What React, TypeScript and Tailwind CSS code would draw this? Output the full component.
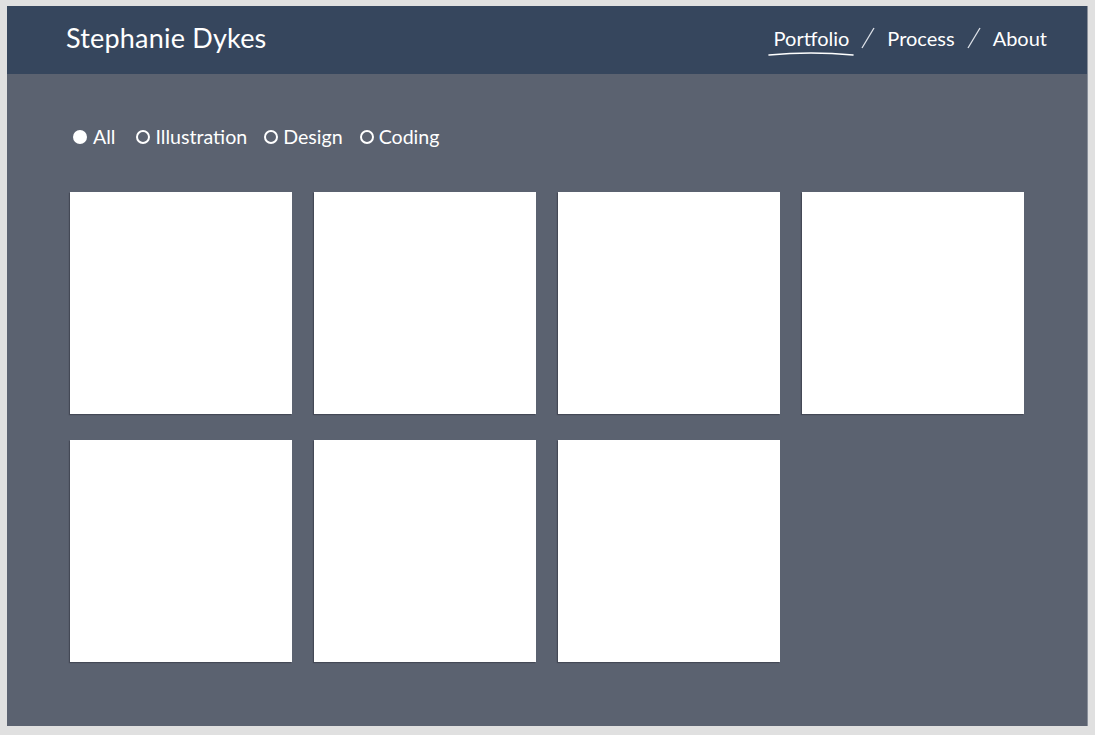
const filters = [
  { label: 'All', active: true },
  { label: 'Illustration', active: false },
  { label: 'Design', active: false },
  { label: 'Coding', active: false },
];

const navLinks = ['Portfolio', 'Process', 'About'];

export default function App() {
  const tiles = [1, 2, 3, 4, 5, 6, 7];

  return (
    <div className="w-[1095px] h-[735px] bg-[#e0e0e0] pt-[6px] pl-[7px] font-['Lato',sans-serif]">
      <div className="w-[1081px] h-[720px] bg-[#5b6270] border-r border-[#8a909b] flex flex-col">
        <header className="h-[68px] bg-[#36465d] flex items-center justify-between pl-[59px] pr-[40px] shrink-0">
          <h1 className="text-white text-[27px] tracking-[0.2px] leading-none pb-[6px]">Stephanie Dykes</h1>
          <nav className="flex items-center text-white text-[20px] leading-none pb-[4px]">
            {navLinks.map((link, i) => (
              <div key={link} className="flex items-center">
                {i > 0 && (
                  <svg width="36" height="24" viewBox="0 0 36 24" className="mx-[1px]">
                    <line x1="12" y1="22" x2="24" y2="2" stroke="#dfe3ea" strokeWidth="1.3" />
                  </svg>
                )}
                <span className="relative">
                  {link}
                  {i === 0 && (
                    <svg width="86" height="6" viewBox="0 0 86 6" className="absolute left-[-6px] top-[23px]">
                      <path d="M1 4 Q 43 0 85 4" stroke="#ffffff" strokeWidth="1.6" fill="none" strokeLinecap="round" />
                    </svg>
                  )}
                </span>
              </div>
            ))}
          </nav>
        </header>

        <main className="pl-[63px] pt-[51px]">
          {/* Filtros */}
          <div className="flex items-center h-[24px] pl-[3px] text-white text-[19.6px] leading-none">
            {filters.map((f, i) => (
              <label key={f.label} className={i === 0 ? 'flex items-center mr-[21px]' : 'flex items-center mr-[17px]'}>
                <span
                  className={
                    f.active
                      ? 'w-[14px] h-[14px] rounded-full bg-white mr-[6px]'
                      : 'w-[14px] h-[14px] rounded-full border-[2px] border-white mr-[5px]'
                  }
                />
                {f.label}
              </label>
            ))}
          </div>

          {/* Grade de trabalhos */}
          <div className="grid grid-cols-[repeat(4,222px)] gap-x-[22px] gap-y-[26px] mt-[43px]">
            {tiles.map((t) => (
              <div key={t} className="w-[222px] h-[222px] bg-white shadow-[-1px_1px_1px_rgba(40,45,55,0.45)]" />
            ))}
          </div>
        </main>
      </div>
    </div>
  );
}
